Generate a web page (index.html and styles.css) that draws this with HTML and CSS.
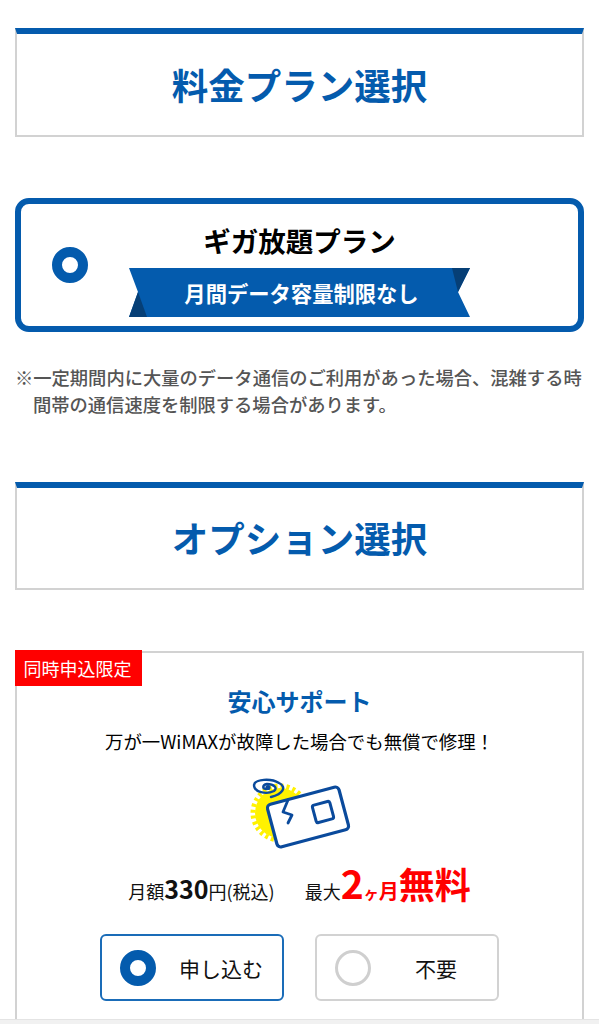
FILE: index.html
```html
<!DOCTYPE html>
<html lang="ja">
<head>
  <meta charset="UTF-8" />
  <meta name="viewport" content="width=device-width, initial-scale=1.0"/>
  <title>料金プラン選択</title>
  <link rel="stylesheet" href="styles.css">
</head>
<body>
  <div class="container">
    <h2 class="section-title">料金プラン選択</h2>

    <div class="plan-card">
      <span class="radio radio-on"></span>
      <div class="plan-body">
        <p class="plan-name">ギガ放題プラン</p>
        <div class="ribbon">
          <svg class="ribbon-bg" viewBox="0 0 341 49" width="341" height="49">
            <polygon points="0,0 341,0 329,24 341,49 0,49 9,24" fill="#045bad"/>
            <polygon points="9,24 18,49 0,49" fill="#063f76"/>
            <polygon points="323,0 341,0 329,24" fill="#063f76"/>
          </svg>
          <span class="ribbon-text">月間データ容量制限なし</span>
        </div>
      </div>
    </div>

    <p class="note">※一定期間内に大量のデータ通信のご利用があった場合、混雑する時間帯の通信速度を制限する場合があります。</p>

    <h2 class="section-title option-title">オプション選択</h2>

    <div class="option-card">
      <span class="tag">同時申込限定</span>
      <h3 class="option-name">安心サポート</h3>
      <p class="option-desc">万が一WiMAXが故障した場合でも無償で修理！</p>

      <svg class="option-icon" viewBox="0 0 110 80" width="110" height="80">
        <circle cx="34" cy="38" r="25" fill="#fff200"/>
        <circle cx="34" cy="38" r="27" fill="none" stroke="#fff200" stroke-width="5" stroke-dasharray="3 3.06"/>
        <path fill="none" stroke="#0a4a9c" stroke-width="2.4" stroke-linecap="round" d="M25 22 C37 19 41 12 33 8 C25 3 9 4 8 10 C8 17 20 20 28 16 C32 13 28 9 21 9 C16 10 16 14 21 14"/>
        <circle cx="22" cy="12.500" r="2.600" fill="#0a4a9c"/>
        <rect x="25" y="20" width="74" height="44" rx="4" transform="rotate(-15 62 42)" fill="#fff" stroke="#0a4a9c" stroke-width="3.2"/>
        <path fill="none" stroke="#0a4a9c" stroke-width="2.800" stroke-linecap="round" stroke-linejoin="round" d="M42 25 L37 37 L46 40 L42 48"/>
        <rect x="68" y="28" width="18" height="18" rx="2" transform="rotate(-15 77 37)" fill="none" stroke="#0a4a9c" stroke-width="3"/>
      </svg>

      <div class="price-row">
        <span class="price">月額<b>330</b>円(税込)</span>
        <span class="free">最大<em class="free-num">2</em><em class="free-unit"><small>ヶ</small>月</em><em class="free-word">無料</em></span>
      </div>

      <div class="choices">
        <div class="choice choice-on"><span class="radio radio-on"></span><span class="choice-label">申し込む</span></div>
        <div class="choice"><span class="radio radio-off"></span><span class="choice-label">不要</span></div>
      </div>
    </div>
  </div>

  <div class="bottom-bar"></div>
</body>
</html>
```

FILE: styles.css
```css
* {
  box-sizing: border-box;
}

html, body {
  margin: 0;
  padding: 0;
  background: #fff;
  font-family: "Noto Sans CJK JP", "Noto Sans", sans-serif;
}

body {
  height: 1024px;
  overflow: hidden;
  position: relative;
}

.container {
  padding: 28px 15px 0;
}

p, h2, h3 {
  margin: 0;
}

.section-title {
  height: 109px;
  border: 2px solid #d2d2d2;
  border-top: 6px solid #045bad;
  color: #045bad;
  font-size: 36.5px;
  font-weight: 700;
  line-height: 101px;
  text-align: center;
}

.plan-card {
  margin-top: 61px;
  height: 134px;
  border: 6px solid #045bad;
  border-radius: 14px;
  padding: 0 107px 0 31px;
  display: flex;
  align-items: center;
}

.radio {
  flex: none;
  display: block;
  width: 36px;
  height: 36px;
  border-radius: 50%;
}

.radio-on {
  border: 10px solid #045bad;
}

.radio-off {
  border: 3px solid #cfcfcf;
}

.plan-body {
  margin-left: 41px;
  width: 341px;
  padding-top: 9px;
}

.plan-name {
  color: #000;
  font-size: 27.5px;
  font-weight: 700;
  line-height: 40px;
  text-align: center;
  margin-top: -2px;
}

.ribbon {
  position: relative;
  height: 49px;
  margin-top: 8px;
}

.ribbon-bg {
  display: block;
}

.ribbon-text {
  position: absolute;
  inset: 0;
  padding-left: 4px;
  color: #fff;
  font-size: 21.3px;
  font-weight: 700;
  line-height: 50px;
  text-align: center;
}

.note {
  margin-top: 32px;
  padding-left: 18px;
  text-indent: -18px;
  color: #555;
  font-size: 18.3px;
  font-weight: 500;
  line-height: 27px;
}

.option-title {
  margin-top: 64px;
  height: 108px;
  line-height: 100px;
}

.option-card {
  position: relative;
  margin-top: 61px;
  height: 420px;
  border: 2px solid #d2d2d2;
  text-align: center;
}

.tag {
  position: absolute;
  left: -2px;
  top: -3px;
  width: 127px;
  height: 36px;
  padding-right: 2px;
  background: #ff0000;
  color: #fff;
  font-size: 18px;
  line-height: 36px;
}

.option-name {
  padding-top: 30px;
  color: #045bad;
  font-size: 24px;
  font-weight: 700;
  line-height: 36px;
}

.option-desc {
  margin-top: 7px;
  color: #000;
  font-size: 18.4px;
  line-height: 30px;
}

.option-icon {
  display: block;
  margin: 19px auto 0;
  transform: translateX(1px);
}

.price-row {
  display: flex;
  justify-content: center;
  align-items: baseline;
  gap: 30px;
  margin-top: 4px;
  height: 46px;
  color: #111;
  font-size: 18px;
  line-height: 46px;
}

.price b {
  font-size: 25px;
}

.free em {
  font-style: normal;
  font-weight: 700;
  color: #ff0000;
}

.free-num {
  font-size: 39px;
}

.free-unit {
  font-size: 20px;
}

.free-unit small {
  font-size: 15px;
}

.free-word {
  font-size: 36px;
}

.choices {
  display: flex;
  justify-content: center;
  gap: 31px;
  margin-top: 29px;
}

.choice {
  width: 184px;
  height: 67px;
  border: 2px solid #d2d2d2;
  border-radius: 6px;
  padding-left: 18px;
  display: flex;
  align-items: center;
}

.choice-on {
  border-color: #1a6cb8;
}

.choice-label {
  flex: 1;
  padding-left: 4px;
  color: #111;
  font-size: 21px;
  text-align: center;
}

.bottom-bar {
  position: absolute;
  left: 0;
  right: 0;
  bottom: 0;
  height: 5px;
  background: #f1f1f1;
  border-top: 1px solid #e4e4e4;
}
```
